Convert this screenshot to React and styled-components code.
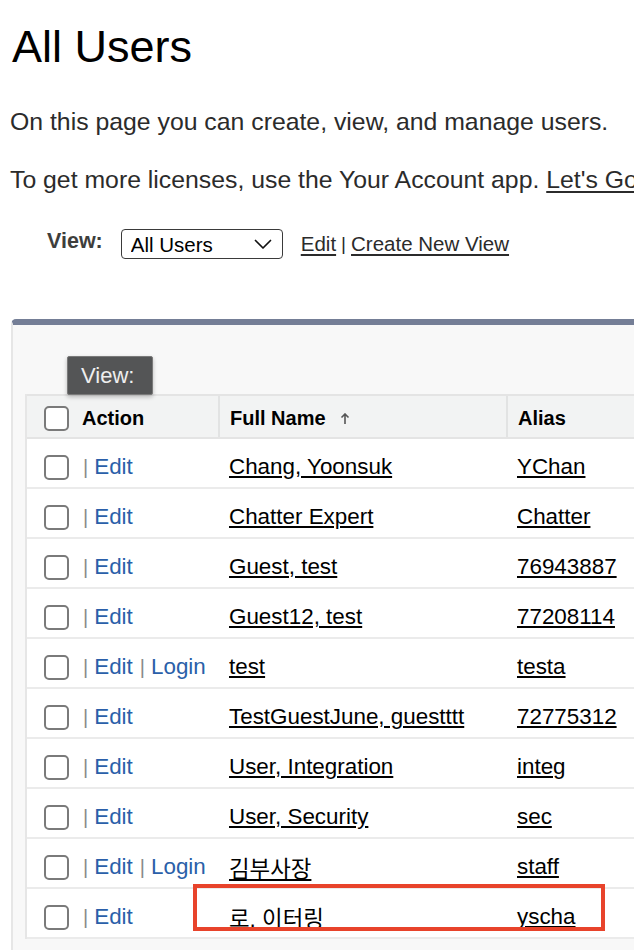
import React from 'react'
import styled, { createGlobalStyle } from 'styled-components'

const GlobalStyle = createGlobalStyle`
  html, body {
    margin: 0;
    padding: 0;
    overflow: hidden;
    background: #ffffff;
  }
  body {
    font-family: "Liberation Sans", Arial, "Noto Sans CJK KR", sans-serif;
    color: #181818;
  }
`

const users = [
  { name: 'Chang, Yoonsuk', alias: 'YChan' },
  { name: 'Chatter Expert', alias: 'Chatter' },
  { name: 'Guest, test', alias: '76943887' },
  { name: 'Guest12, test', alias: '77208114' },
  { name: 'test', alias: 'testa', login: true },
  { name: 'TestGuestJune, guestttt', alias: '72775312' },
  { name: 'User, Integration', alias: 'integ' },
  { name: 'User, Security', alias: 'sec' },
  { name: '김부사장', alias: 'staff', login: true },
  { name: '로, 이터링', alias: 'yscha' },
]

export default function App() {
  return (
    <>
      <GlobalStyle />
      <Page>
        <Title>All Users</Title>
        <Intro>On this page you can create, view, and manage users.</Intro>
        <Licenses>
          To get more licenses, use the Your Account app. <DarkLink href="#">Let's Go</DarkLink>
        </Licenses>
        <ViewRow>
          <ViewLabel>View:</ViewLabel>
          <SelectWrap>
            <Select defaultValue="all">
              <option value="all">All Users</option>
              <option value="active">Active Users</option>
            </Select>
            <Chevron width="18" height="11" viewBox="0 0 18 11">
              <path d="M1.5 1.5 L9 9 L16.5 1.5" fill="none" stroke="#111" strokeWidth="1.7" strokeLinecap="round" strokeLinejoin="round" />
            </Chevron>
          </SelectWrap>
          <ViewLinks>
            <DarkLink href="#">Edit</DarkLink>
            <Sep>|</Sep>
            <DarkLink href="#">Create New View</DarkLink>
          </ViewLinks>
        </ViewRow>

        <Panel>
          <Tooltip>View:</Tooltip>
          <Table>
            <HeaderRow>
              <HeadCell>
                <Checkbox />
                <HeadText>Action</HeadText>
              </HeadCell>
              <HeadCell divided>
                <span>Full Name</span>
                <SortArrow width="10" height="12" viewBox="0 0 10 12">
                  <path d="M5 1 L5 11 M1.5 4.5 L5 1 L8.5 4.5" fill="none" stroke="#555" strokeWidth="1.6" />
                </SortArrow>
              </HeadCell>
              <HeadCell divided>
                <span>Alias</span>
              </HeadCell>
              <HeadCell divided />
            </HeaderRow>
            {users.map((u) => (
              <Row key={u.name}>
                <Cell>
                  <Checkbox />
                  <Actions>
                    <Pipe>|</Pipe>
                    <ActionLink href="#">Edit</ActionLink>
                    {u.login && (
                      <>
                        <Pipe>|</Pipe>
                        <ActionLink href="#">Login</ActionLink>
                      </>
                    )}
                  </Actions>
                </Cell>
                <Cell>
                  <DataLink href="#">{u.name}</DataLink>
                </Cell>
                <Cell>
                  <DataLink href="#">{u.alias}</DataLink>
                </Cell>
                <Cell />
              </Row>
            ))}
            <Highlight />
          </Table>
        </Panel>
      </Page>
    </>
  )
}

const Page = styled.div`
  padding: 0 0 0 10px;
  width: 1000px;
`

const Title = styled.h1`
  margin: 21px 0 0 2px;
  font-size: 45px;
  line-height: 52px;
  font-weight: 400;
  color: #000;
`

const Intro = styled.p`
  margin: 37px 0 0;
  font-size: 24.8px;
  line-height: 24px;
  color: #2b2b2b;
  white-space: nowrap;
`

const Licenses = styled(Intro)`
  margin-top: 34px;
`

const DarkLink = styled.a`
  color: #2b2b2b;
  text-decoration: underline;
  text-underline-offset: 3px;
`

const ViewRow = styled.div`
  display: flex;
  align-items: center;
  margin-top: 37px;
  padding-left: 37px;
  height: 29px;
  font-size: 20.5px;
`

const ViewLabel = styled.span`
  font-weight: 700;
  font-size: 21.5px;
  color: #3e3e3c;
  margin-right: 18px;
  position: relative;
  top: -2px;
`

const SelectWrap = styled.div`
  position: relative;
  width: 162px;
  height: 30px;
`

const Select = styled.select`
  appearance: none;
  width: 100%;
  height: 100%;
  box-sizing: border-box;
  border: 1.5px solid #3a3a3a;
  border-radius: 4px;
  background: #fff;
  padding: 2px 0 0 9px;
  font-family: inherit;
  font-size: 20.5px;
  color: #000;
  outline: none;
`

const Chevron = styled.svg`
  position: absolute;
  right: 11px;
  top: 10px;
  pointer-events: none;
`

const ViewLinks = styled.div`
  display: flex;
  align-items: center;
  margin-left: 18px;
  color: #2b2b2b;
`

const Sep = styled.span`
  margin: 0 5px;
  font-size: 19px;
`

const Panel = styled.div`
  position: relative;
  margin: 61px 0 0 1px;
  padding: 69px 0 0 12px;
  background: #f8f8f8;
  border-top: 6px solid #747e96;
  border-left: 2px solid #e6e6e6;
  border-top-left-radius: 5px;
  min-height: 600px;
`

const Tooltip = styled.div`
  position: absolute;
  left: 54px;
  top: 31px;
  z-index: 2;
  width: 86px;
  height: 39px;
  box-sizing: border-box;
  display: flex;
  align-items: center;
  padding-left: 13px;
  background: #545556;
  border: 1px solid #7a7a7a;
  border-radius: 2px;
  color: #eeeeee;
  font-size: 22px;
  box-shadow: 0 2px 4px rgba(0, 0, 0, 0.25);
`

const Table = styled.div`
  position: relative;
  border-left: 2px solid #e6e6e6;
  background: #fff;
`

const columns = '191px 288px 220px 300px'

const HeaderRow = styled.div`
  display: grid;
  grid-template-columns: ${columns};
  height: 45px;
  box-sizing: border-box;
  background: #f2f3f3;
  border-top: 2px solid #e4e4e4;
  border-bottom: 2px solid #e4e4e4;
`

const HeadCell = styled.div`
  display: flex;
  align-items: center;
  padding-top: 4px;
  padding-left: ${(p) => (p.divided ? '10px' : '17px')};
  border-left: ${(p) => (p.divided ? '2px solid #e2e3e3' : 'none')};
  font-size: 20px;
  font-weight: 700;
  color: #000;
`

const HeadText = styled.span`
  margin-left: 13px;
`

const SortArrow = styled.svg`
  margin-left: 14px;
`

const Row = styled.div`
  display: grid;
  grid-template-columns: ${columns};
  height: 50px;
  box-sizing: border-box;
  border-bottom: 2px solid #ebebeb;
  background: #fff;
`

const Cell = styled.div`
  display: flex;
  align-items: center;
  padding-top: 8px;
  padding-left: 11px;
  font-size: 22.4px;
  &:first-child {
    padding-left: 17px;
  }
`

const Checkbox = styled.input.attrs({ type: 'checkbox' })`
  appearance: none;
  margin: 0;
  width: 25px;
  height: 25px;
  box-sizing: border-box;
  border: 2px solid #7a7a7a;
  border-radius: 5px;
  background: #fff;
  flex-shrink: 0;
`

const Actions = styled.div`
  display: flex;
  align-items: center;
  margin-left: 14px;
`

const Pipe = styled.span`
  color: #8a8a8a;
  font-size: 20px;
  margin-right: 6px;
  &:not(:first-child) {
    margin-left: 7px;
  }
`

const ActionLink = styled.a`
  color: #2a5fa9;
  text-decoration: none;
`

const DataLink = styled.a`
  color: #000;
  text-decoration: underline;
  text-underline-offset: 2px;
  white-space: nowrap;
`

const Highlight = styled.div`
  position: absolute;
  left: 166px;
  top: 490px;
  width: 412px;
  height: 47px;
  box-sizing: border-box;
  border: 4px solid #e8432b;
  pointer-events: none;
`
